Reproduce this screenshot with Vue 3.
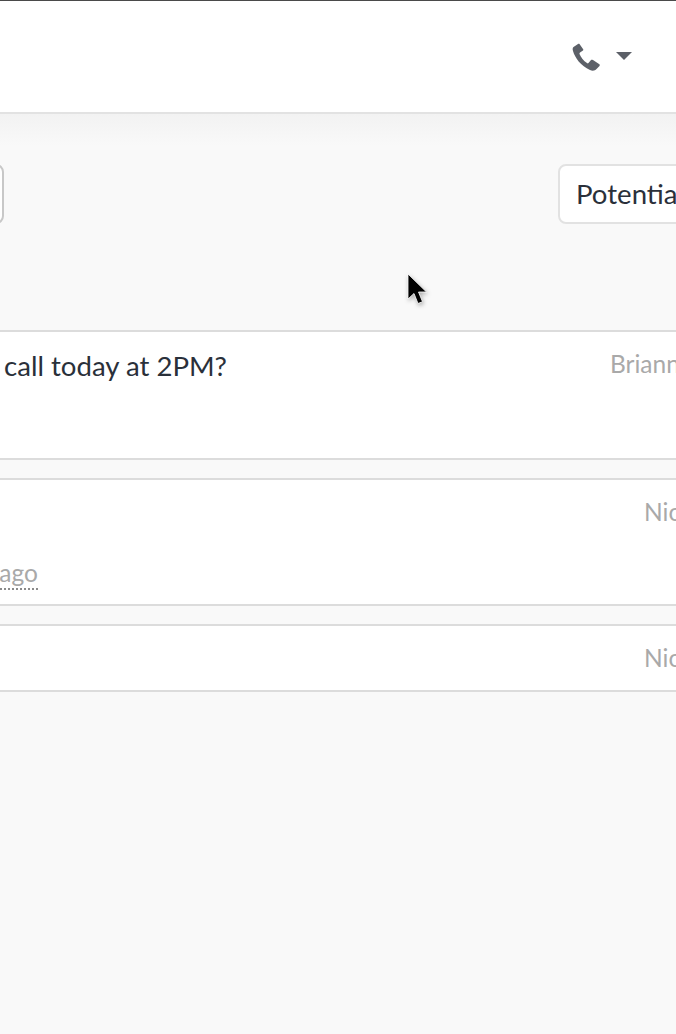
<script setup>
const rows = [
  { id: 1, cls: 'tall', msg: 'call today at 2PM?', who: 'Brianna', whoCls: 'brianna' },
  { id: 2, cls: 'mid', msg: '', who: 'Nicole', whoCls: 'nicole', ago: '2 days ago' },
  { id: 3, cls: 'short', msg: '', who: 'Nicole', whoCls: 'nicole' }
]
</script>

<template>
  <div class="page">
    <header class="top">
      <svg class="phone" viewBox="0 0 29 29" width="29" height="29" aria-hidden="true">
        <path d="M6 1 1.500 4C.5 5 .5 6 1 8c2 7 8 15 17 19 3 1.500 5 .5 6.500-1l3-3c.5-1 .5-1.500-.5-2l-6-4c-1-.5-1.500-.5-2 0l-2.500 3c-.5.5-1 .5-1.500 0-3.500-2-6-5.500-7.500-9-.2-.5 0-1 .5-1.500l3-2c.5-.5.5-1 0-1.500L7.500 1C7 .5 6.500 .5 6 1Z" fill="#5c6068"/>
      </svg>
      <span class="caret"></span>
    </header>
    <div class="toolbar">
      <div class="box left-box"></div>
      <div class="box select">Potential</div>
    </div>
    <section class="list">
      <article v-for="r in rows" :key="r.id" class="row" :class="r.cls">
        <div class="main">
          <p v-if="r.msg" class="msg">{{ r.msg }}</p>
          <div v-if="r.ago" class="ago-clip"><span class="ago">{{ r.ago }}</span></div>
        </div>
        <span class="who" :class="r.whoCls">{{ r.who }}</span>
      </article>
    </section>
    <svg class="cursor" viewBox="0 0 24 36" width="24" height="36" aria-hidden="true">
      <path d="M2 1v25l6-5.500 4 10 4.500-1.800-4-9.700h8Z" fill="#000" stroke="#fff" stroke-width="0.800"/>
    </svg>
  </div>
</template>

<style>
html, body { margin: 0; background: #f9f9f9; }
</style>

<style scoped>
.page {
  position: relative;
  width: 676px;
  height: 1034px;
  overflow: hidden;
  background: #f9f9f9;
  font-family: Lato, "Open Sans", sans-serif;
  color: #2a303a;
}
.top {
  box-sizing: border-box;
  height: 114px;
  background: #fff;
  border-top: 1px solid #4a4a4a;
  border-bottom: 2px solid #e2e2e2;
  display: flex;
  align-items: center;
  justify-content: flex-end;
  padding: 0 44px 1px 0;
  gap: 15px;
}
.phone { display: block; width: 29px; height: 29px; margin-top: 3px; }
.caret {
  width: 0;
  height: 0;
  border-left: 8px solid transparent;
  border-right: 8px solid transparent;
  border-top: 8px solid #5c6068;
  margin-top: -1px;
}
.toolbar {
  box-sizing: border-box;
  height: 216px;
  background: linear-gradient(#f2f2f2, #f9f9f9 32px);
  display: flex;
  align-items: flex-start;
  justify-content: space-between;
  padding-top: 50px;
}
.box {
  box-sizing: border-box;
  height: 60px;
  background: #fff;
  border: 2px solid #e2e2e2;
  border-radius: 8px;
}
.left-box {
  width: 60px;
  margin-left: -56px;
  border-color: #c8c8c8;
}
.select {
  width: 160px;
  margin-right: -42px;
  padding-left: 16px;
  font-size: 27.6px;
  line-height: 55px;
  white-space: nowrap;
  overflow: hidden;
}
.list {
  display: flex;
  flex-direction: column;
  gap: 18px;
}
.row {
  box-sizing: border-box;
  display: flex;
  justify-content: space-between;
  background: #fff;
  border-top: 2px solid #dcdcdc;
  border-bottom: 2px solid #dcdcdc;
}
.tall { height: 130px; }
.mid { height: 128px; }
.short { height: 68px; }
.main { min-width: 0; }
.msg {
  margin: 0;
  padding: 17px 0 0 4px;
  font-size: 27.6px;
  line-height: 34px;
  white-space: nowrap;
}
.ago-clip {
  width: 38px;
  margin-top: 78px;
  display: flex;
  justify-content: flex-end;
  overflow: hidden;
}
.ago {
  flex: none;
  font-size: 24.5px;
  line-height: 30px;
  color: #a9a9a9;
  border-bottom: 2px dotted #8a8a8a;
  white-space: nowrap;
}
.who {
  font-size: 24.5px;
  line-height: 30px;
  color: #a9a9a9;
  white-space: nowrap;
  overflow: hidden;
  padding-top: 17px;
}
.brianna { width: 66px; }
.nicole { width: 32px; }
.cursor {
  position: absolute;
  left: 406px;
  top: 273px;
  filter: drop-shadow(1px 2px 2px rgba(0, 0, 0, 0.3));
}
</style>
